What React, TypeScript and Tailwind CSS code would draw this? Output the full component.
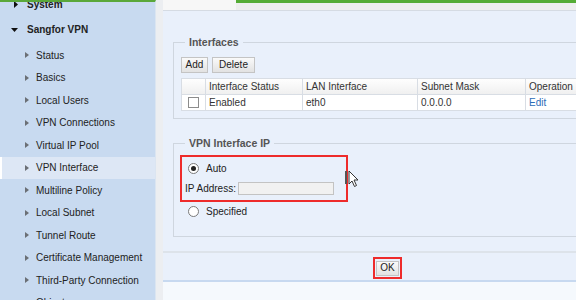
import React from 'react';

const navItems = [
  'Status',
  'Basics',
  'Local Users',
  'VPN Connections',
  'Virtual IP Pool',
  'VPN Interface',
  'Multiline Policy',
  'Local Subnet',
  'Tunnel Route',
  'Certificate Management',
  'Third-Party Connection',
  'Objects',
];

const SmallArrow = () => (
  <svg width="4" height="6" viewBox="0 0 4 6" className="shrink-0">
    <polygon points="0,0 4,3 0,6" fill="#6b6f75" />
  </svg>
);

const Radio: React.FC<{ checked?: boolean }> = ({ checked }) => (
  <span className="flex h-[11px] w-[11px] shrink-0 items-center justify-center rounded-full border border-[#7a7a7a] bg-white">
    {checked && <span className="h-[5px] w-[5px] rounded-full bg-[#222]" />}
  </span>
);

const Btn: React.FC<{ label: string; w: string }> = ({ label, w }) => (
  <button className={`h-[16px] ${w} border border-[#c4c4c4] bg-gradient-to-b from-[#fafafa] to-[#e2e2e2] text-[10px] leading-none text-[#222]`}>
    {label}
  </button>
);

const Sidebar = () => (
  <aside className="flex w-[156px] shrink-0 flex-col overflow-hidden border-r border-[#dbe5f1] border-t-2 border-t-[#5aa83a] bg-[#c8daf0] text-[10px] text-[#222]">
    <div className="mt-[-9px] flex h-[22px] shrink-0 items-center gap-[8px] pl-[14px] font-bold">
      <svg width="4" height="7" viewBox="0 0 4 7" className="shrink-0">
        <polygon points="0,0 4,3.5 0,7" fill="#111" />
      </svg>
      <span className="ml-[1px]">System</span>
    </div>
    <div className="flex h-[29px] shrink-0 items-center pl-[11px] font-bold">
      <svg width="7" height="4" viewBox="0 0 7 4" className="shrink-0">
        <polygon points="0,0 7,0 3.5,4" fill="#111" />
      </svg>
      <span className="ml-[9px]">Sangfor VPN</span>
    </div>
    {navItems.map((item) =>
      item === 'VPN Interface' ? (
        <div key={item} className="flex h-[22.5px] shrink-0 items-center border-l-2 border-white bg-[#dde7f5]">
          <span className="ml-[23px] flex items-center gap-[7px]">
            <SmallArrow />
            <span className="whitespace-nowrap">{item}</span>
          </span>
        </div>
      ) : (
        <div key={item} className="flex h-[22.5px] shrink-0 items-center">
          <span className="ml-[25px] flex items-center gap-[7px]">
            <SmallArrow />
            <span className="whitespace-nowrap">{item}</span>
          </span>
        </div>
      )
    )}
  </aside>
);

const cols = [
  { label: '', w: 'w-[24px]' },
  { label: 'Interface Status', w: 'w-[97px]' },
  { label: 'LAN Interface', w: 'w-[115px]' },
  { label: 'Subnet Mask', w: 'w-[108px]' },
  { label: 'Operation', w: 'w-[80px]' },
];

export default function App() {
  return (
    <div
      className="relative flex h-[300px] w-[576px] overflow-hidden bg-white text-[10px] text-[#333]"
      style={{ fontFamily: "Tahoma, 'Liberation Sans', Arial, sans-serif" }}
    >
      <Sidebar />
      <div className="w-[7px] shrink-0 bg-[#eceef1]" />

      <main className="flex min-w-0 flex-1 flex-col overflow-hidden">
        {/* tab strip */}
        <div className="flex h-[11px] shrink-0 border-b border-[#d5dbe3]">
          <div className="w-[73px] shrink-0 bg-[#f7f7f7]" />
          <div className="flex-1 border-t-[3px] border-[#55ac35] bg-[#eeeeee]" />
        </div>

        {/* panel */}
        <div className="h-[242px] shrink-0 border-b-2 border-[#dde3ea] bg-[#e9f0fb] pl-[10px]">
          <fieldset className="mt-[25px] w-[460px] border border-[#cfd6df] pb-[7px] pl-[7px]">
            <legend className="ml-[4px] px-[4px] text-[10.5px] font-bold leading-[12px] text-[#555]">Interfaces</legend>
            <div className="mt-[9px] flex gap-[4px]">
              <Btn label="Add" w="w-[27px]" />
              <Btn label="Delete" w="w-[43px]" />
            </div>
            <div className="mt-[5px] flex flex-col border-l border-[#d8dde4]">
              <div className="flex h-[17px] bg-gradient-to-b from-white to-[#efefef]">
                {cols.map((c, i) => (
                  <div
                    key={i}
                    className={`${c.w} flex shrink-0 items-center border-r border-b border-t border-[#d8dde4] pl-[3px] whitespace-nowrap text-[#333]`}
                  >
                    {c.label}
                  </div>
                ))}
              </div>
              <div className="flex h-[16px] bg-white">
                <div className="flex w-[24px] shrink-0 items-center justify-center border-r border-b border-[#d8dde4]">
                  <span className="h-[11px] w-[11px] border border-[#8c8c8c] bg-white" />
                </div>
                <div className="flex w-[97px] shrink-0 items-center border-r border-b border-[#d8dde4] pl-[3px]">Enabled</div>
                <div className="flex w-[115px] shrink-0 items-center border-r border-b border-[#d8dde4] pl-[3px]">eth0</div>
                <div className="flex w-[108px] shrink-0 items-center border-r border-b border-[#d8dde4] pl-[3px]">0.0.0.0</div>
                <div className="flex w-[80px] shrink-0 items-center border-r border-b border-[#d8dde4] pl-[3px] text-[#2b6cb8]">Edit</div>
              </div>
            </div>
          </fieldset>

          <fieldset className="mt-[18px] w-[460px] border border-[#cfd6df] pb-[18px] pl-[6px]">
            <legend className="ml-[5px] px-[4px] text-[10.5px] font-bold leading-[12px] text-[#555]">VPN Interface IP</legend>
            <div className="mt-[6px] w-[168px] border-2 border-[#ee2b2b] pb-[5px]">
              <div className="mt-[4px] flex h-[14px] items-center">
                <span className="ml-[6px]"><Radio checked /></span>
                <span className="ml-[7px] text-[#222]">Auto</span>
              </div>
              <div className="mt-[7px] flex h-[13px] items-center">
                <span className="ml-[3px] text-[#222]">IP Address:</span>
                <span className="ml-[2px] h-[13px] w-[96px] border border-[#c3c3c3] bg-[#f1f1f1]" />
              </div>
            </div>
            <div className="mt-[2px] flex h-[14px] items-center">
              <span className="ml-[8px]"><Radio /></span>
              <span className="ml-[7px] text-[#222]">Specified</span>
            </div>
          </fieldset>
        </div>

        {/* footer */}
        <div className="flex h-[29px] shrink-0 items-start border-b-2 border-[#c7d9f0] bg-[#e9f0fb] pl-[210px] pt-[4px]">
          <div className="border-2 border-[#ee2b2b] p-px">
            <button className="h-[15px] w-[23px] border border-[#c4c4c4] bg-gradient-to-b from-[#fafafa] to-[#e2e2e2] text-[10px] leading-none text-[#222]">
              OK
            </button>
          </div>
        </div>
        <div className="flex-1 bg-[#f5f9fd]" />
      </main>

      {/* mouse cursor */}
      <div className="pointer-events-none absolute left-[345px] top-[170px] flex">
        <span className="mt-[1px] h-[13px] w-[2px] bg-[#555]" />
        <svg width="12" height="18" viewBox="0 0 12 18" className="ml-[1px]">
          <path d="M1 1 L1 14 L4 11 L6.5 16.5 L8.5 15.5 L6 10 L10 10 Z" fill="#fff" stroke="#333" strokeWidth="1" strokeLinejoin="round" />
        </svg>
      </div>
    </div>
  );
}
